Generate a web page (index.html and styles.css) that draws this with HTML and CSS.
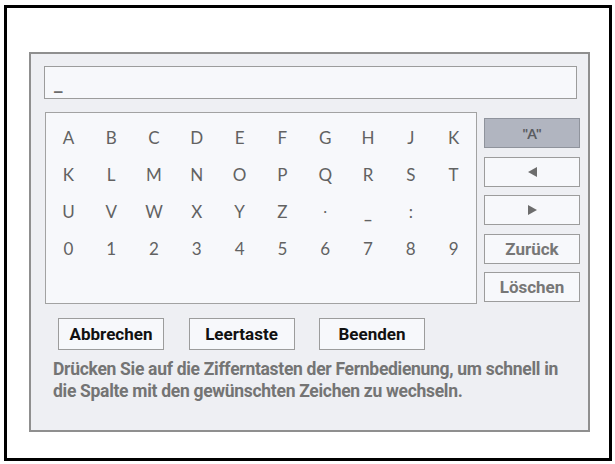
FILE: index.html
```html
<!DOCTYPE html>
<html lang="de">
<head>
<meta charset="utf-8">
<title>Zeicheneingabe</title>
<link rel="stylesheet" href="styles.css">
</head>
<body>
<div class="frame">
  <div class="panel">
    <div class="input"><span class="cursor">_</span></div>
    <div class="main">
      <div class="grid">
        <span>A</span><span>B</span><span>C</span><span>D</span><span>E</span><span>F</span><span>G</span><span>H</span><span>J</span><span>K</span>
        <span>K</span><span>L</span><span>M</span><span>N</span><span>O</span><span>P</span><span>Q</span><span>R</span><span>S</span><span>T</span>
        <span>U</span><span>V</span><span>W</span><span>X</span><span>Y</span><span>Z</span><span class="dot">·</span><span class="under">_</span><span>:</span><span></span>
        <span>0</span><span>1</span><span>2</span><span>3</span><span>4</span><span>5</span><span>6</span><span>7</span><span>8</span><span>9</span>
      </div>
      <div class="side">
        <div class="sbtn active">"A"</div>
        <div class="sbtn"><span class="tri tri-left"></span></div>
        <div class="sbtn"><span class="tri tri-right"></span></div>
        <div class="sbtn label">Zurück</div>
        <div class="sbtn label">Löschen</div>
      </div>
    </div>
    <div class="actions">
      <div class="btn">Abbrechen</div>
      <div class="btn">Leertaste</div>
      <div class="btn">Beenden</div>
    </div>
    <p class="hint">Drücken Sie auf die Zifferntasten der Fernbedienung, um schnell in die Spalte mit den gewünschten Zeichen zu wechseln.</p>
  </div>
</div>
</body>
</html>
```

FILE: styles.css
```css
html, body {
  margin: 0;
  padding: 0;
  background: #ffffff;
}
body {
  width: 615px;
  height: 464px;
  overflow: hidden;
  font-family: Roboto, "Liberation Sans", Arial, sans-serif;
}
.frame {
  box-sizing: border-box;
  margin: 5px 0 0 4px;
  width: 608px;
  height: 456px;
  border: 3px solid #000;
  background: #ffffff;
  padding: 44px 0 0 22px;
}
.panel {
  box-sizing: border-box;
  width: 561px;
  height: 380px;
  border: 2px solid #8f8f8f;
  background: #eeeff3;
  padding: 12px 0 0 13px;
}
.input {
  box-sizing: border-box;
  width: 533px;
  height: 33px;
  border: 1px solid #9c9c9c;
  background: #f7f8fb;
  padding: 0 0 0 9px;
}
.cursor {
  display: block;
  font-family: "DejaVu Sans", sans-serif;
  font-size: 17px;
  font-weight: bold;
  color: #6b6b6b;
  line-height: 30px;
  transform: translateY(1px);
}
.main {
  display: flex;
  margin-top: 13px;
  margin-left: 1px;
}
.grid {
  box-sizing: border-box;
  width: 432px;
  height: 192px;
  border: 1px solid #a2a2a2;
  background: #f7f8fb;
  padding: 5.5px 0 0 1px;
  display: grid;
  grid-template-columns: repeat(10, 42.8px);
  grid-auto-rows: 37px;
  align-content: start;
  font-family: Lato, "Noto Sans", sans-serif;
  font-size: 17px;
  color: #626262;
}
.grid span {
  display: flex;
  align-items: center;
  justify-content: center;
}
.grid .under {
  align-items: flex-end;
  padding-bottom: 7px;
  box-sizing: border-box;
  font-weight: bold;
}
.grid .dot {
  font-size: 13px;
}
.side {
  display: flex;
  flex-direction: column;
  gap: 8.5px;
  margin-left: 7px;
  padding-top: 6px;
}
.sbtn {
  box-sizing: border-box;
  width: 96px;
  height: 30px;
  border: 1px solid #9c9c9c;
  background: #f7f8fb;
  display: flex;
  align-items: center;
  justify-content: center;
  color: #777;
}
.sbtn.active {
  background: #b1b5c0;
  border-color: #8f939c;
  color: #5a5c61;
  font-family: Lato, "Noto Sans", sans-serif;
  font-size: 14px;
  font-weight: bold;
}
.sbtn.label {
  font-weight: bold;
  font-size: 17px;
  color: #777;
}
.tri {
  width: 0;
  height: 0;
  border-top: 5px solid transparent;
  border-bottom: 5px solid transparent;
}
.tri-left {
  border-right: 9px solid #6d6d6d;
}
.tri-right {
  border-left: 9px solid #6d6d6d;
}
.actions {
  display: flex;
  gap: 24.5px;
  margin: 14px 0 0 14px;
}
.btn {
  box-sizing: border-box;
  width: 106px;
  height: 32px;
  border: 1px solid #9c9c9c;
  background: #f7f8fb;
  display: flex;
  align-items: center;
  justify-content: center;
  font-weight: bold;
  font-size: 17px;
  color: #111;
}
.hint {
  margin: 8px 0 0 9px;
  width: 530px;
  font-weight: bold;
  font-size: 17.5px;
  letter-spacing: -0.3px;
  line-height: 22px;
  color: #747474;
}
```
